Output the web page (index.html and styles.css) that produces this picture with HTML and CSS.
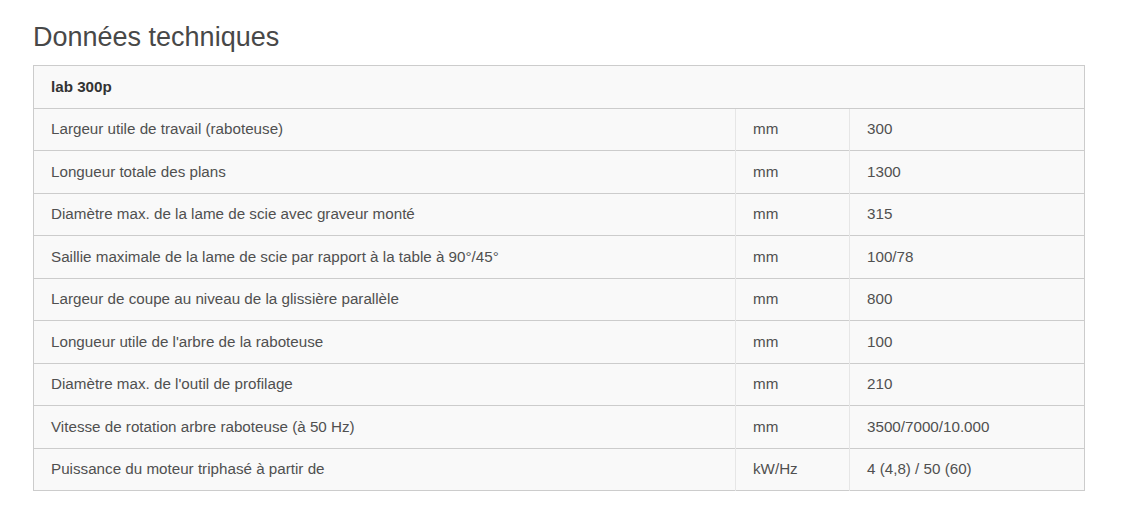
FILE: index.html
```html
<!DOCTYPE html>
<html lang="fr">
<head>
<meta charset="utf-8">
<title>Données techniques</title>
<link rel="stylesheet" href="styles.css">
</head>
<body>
<section class="specs">
  <h2 class="specs-title">Données techniques</h2>
  <table class="specs-table">
    <thead>
      <tr><th colspan="3">lab 300p</th></tr>
    </thead>
    <tbody>
      <tr><td class="c-label">Largeur utile de travail (raboteuse)</td><td class="c-unit">mm</td><td class="c-val">300</td></tr>
      <tr><td class="c-label">Longueur totale des plans</td><td class="c-unit">mm</td><td class="c-val">1300</td></tr>
      <tr><td class="c-label">Diamètre max. de la lame de scie avec graveur monté</td><td class="c-unit">mm</td><td class="c-val">315</td></tr>
      <tr><td class="c-label">Saillie maximale de la lame de scie par rapport à la table à 90°/45°</td><td class="c-unit">mm</td><td class="c-val">100/78</td></tr>
      <tr><td class="c-label">Largeur de coupe au niveau de la glissière parallèle</td><td class="c-unit">mm</td><td class="c-val">800</td></tr>
      <tr><td class="c-label">Longueur utile de l'arbre de la raboteuse</td><td class="c-unit">mm</td><td class="c-val">100</td></tr>
      <tr><td class="c-label">Diamètre max. de l'outil de profilage</td><td class="c-unit">mm</td><td class="c-val">210</td></tr>
      <tr><td class="c-label">Vitesse de rotation arbre raboteuse (à 50 Hz)</td><td class="c-unit">mm</td><td class="c-val">3500/7000/10.000</td></tr>
      <tr><td class="c-label">Puissance du moteur triphasé à partir de</td><td class="c-unit">kW/Hz</td><td class="c-val">4 (4,8) / 50 (60)</td></tr>
    </tbody>
  </table>
</section>
</body>
</html>
```

FILE: styles.css
```css
html, body {
  margin: 0;
  padding: 0;
  background: #ffffff;
}

body {
  font-family: "Liberation Sans", Arial, sans-serif;
  color: #444444;
}

.specs {
  padding: 20px 37px 0 33px;
}

.specs-title {
  margin: 0 0 10px 0;
  font-family: "Liberation Sans", Arial, sans-serif;
  font-weight: 400;
  font-size: 27px;
  line-height: 35px;
  color: #484848;
}

.specs-table {
  width: 100%;
  border-collapse: collapse;
  background: #f9f9f9;
  border: 1px solid #cccccc;
  font-size: 15.2px;
}

.specs-table th,
.specs-table td {
  height: 42.5px;
  box-sizing: border-box;
  padding: 0 17px;
  text-align: left;
  vertical-align: middle;
  border-top: 1px solid #cccccc;
  line-height: 18px;
}

.specs-table th {
  font-weight: 700;
  color: #333333;
}

.specs-table td {
  color: #505050;
}

.specs-table td + td {
  border-left: 1px solid #e6e6e6;
}

.c-label {
  width: 702px;
}

.c-unit {
  width: 114px;
}
```
